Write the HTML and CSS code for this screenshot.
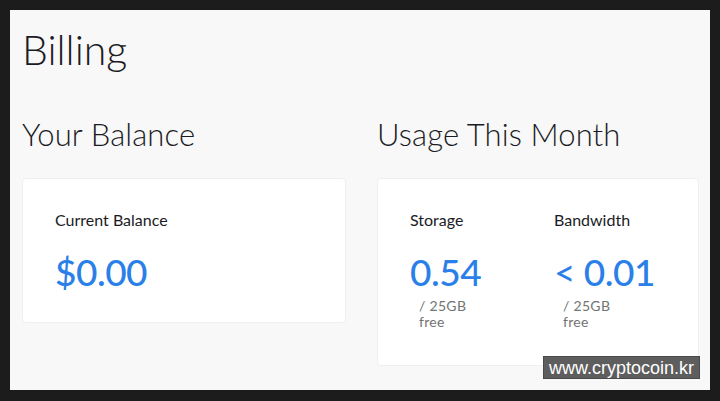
FILE: index.html
```html
<!DOCTYPE html>
<html>
<head>
<meta charset="utf-8">
<link rel="stylesheet" href="styles.css">
</head>
<body>
<div class="frame">
  <main class="page">
    <h1 class="title">Billing</h1>
    <div class="columns">
      <section class="col">
        <h2 class="heading">Your Balance</h2>
        <div class="card card-balance">
          <div class="label">Current Balance</div>
          <div class="value">$0.00</div>
        </div>
      </section>
      <section class="col">
        <h2 class="heading">Usage This Month</h2>
        <div class="card card-usage">
          <div class="metric">
            <div class="label">Storage</div>
            <div class="value">0.54</div>
            <div class="unit">/ 25GB<br>free</div>
          </div>
          <div class="metric">
            <div class="label">Bandwidth</div>
            <div class="value">&lt; 0.01</div>
            <div class="unit">/ 25GB<br>free</div>
          </div>
        </div>
      </section>
    </div>
  </main>
  <div class="watermark">www.cryptocoin.kr</div>
</div>
</body>
</html>
```
FILE: styles.css
```css
html, body {
  margin: 0;
  padding: 0;
}
body {
  background: #1c1c1c;
  width: 720px;
  height: 401px;
  overflow: hidden;
  font-family: Lato, "Open Sans", sans-serif;
  color: #1b1b24;
}
.frame {
  position: relative;
  padding: 10px 10px 11px 10px;
  height: 380px;
}
.page {
  background: #f8f8f8;
  height: 380px;
  padding: 0 11px 0 12px;
  box-sizing: border-box;
}
.title {
  margin: 0;
  padding-top: 15px;
  font-weight: 300;
  font-size: 41px;
  line-height: 50px;
}
.columns {
  display: grid;
  grid-template-columns: 324px 322px;
  column-gap: 31px;
  margin-top: 41px;
  align-items: start;
}
.heading {
  margin: 0;
  font-weight: 300;
  font-size: 31px;
  line-height: 36px;
  letter-spacing: 0.1px;
}
.card {
  margin-top: 26px;
  background: #fff;
  border: 1px solid #efefef;
  border-radius: 4px;
  box-sizing: border-box;
}
.card-balance {
  height: 145px;
  padding: 31px 32px 0;
}
.card-usage {
  height: 188px;
  padding: 31px 32px 0;
  display: grid;
  grid-template-columns: 144px 1fr;
}
.label {
  font-size: 16px;
  line-height: 20px;
  font-weight: 400;
}
.value {
  margin-top: 20px;
  font-size: 37px;
  line-height: 44px;
  font-weight: 500;
  color: #2a80e8;
  letter-spacing: -0.5px;
}
.unit {
  margin-top: 4px;
  padding-left: 9px;
  font-size: 14px;
  line-height: 16px;
  letter-spacing: 0.3px;
  color: #737373;
}
.watermark {
  position: absolute;
  left: 543px;
  top: 356px;
  width: 157px;
  height: 23px;
  background: #5e5e5e;
  color: #fff;
  font-family: "Liberation Sans", Arial, sans-serif;
  font-size: 18px;
  line-height: 22px;
  text-align: center;
  border: 1px solid #4a4a4a;
  box-sizing: border-box;
}
```
